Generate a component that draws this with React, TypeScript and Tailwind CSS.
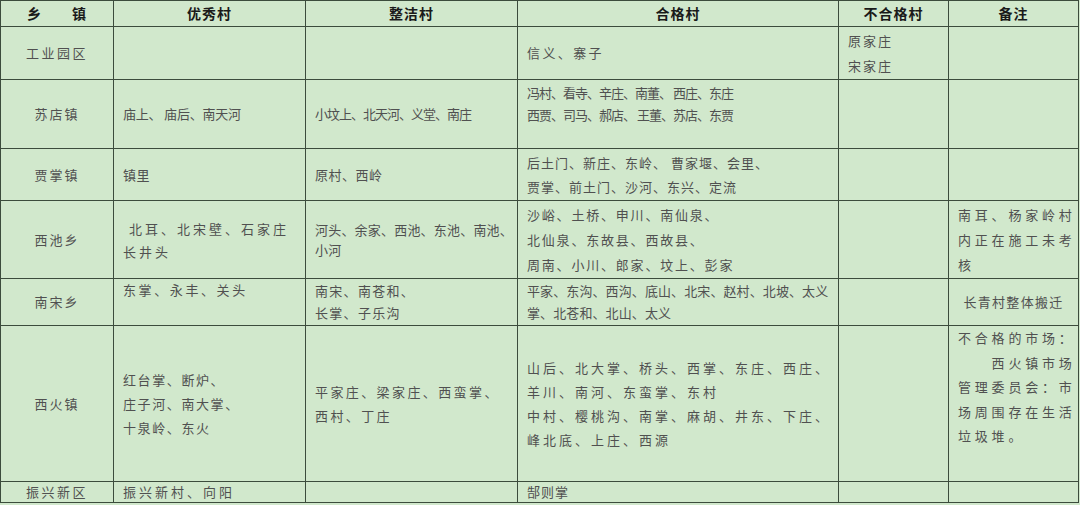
const font = { fontFamily: '"Noto Sans CJK SC", "Noto Sans", sans-serif' }

type Cell = { lines: string[]; cls?: string }

const cols = ['w-[113px]', 'w-[192px]', 'w-[212px]', 'w-[321px]', 'w-[110px]', 'w-[130px]']

const head = ['乡\u3000\u3000镇', '优秀村', '整洁村', '合格村', '不合格村', '备注']

const rows: { h: string; cells: Cell[] }[] = [
  {
    h: 'h-[53px]',
    cells: [
      { lines: ['工业园区'], cls: 'text-center tracking-[2.5px]' },
      { lines: [] },
      { lines: [] },
      { lines: ['信义、寨子'], cls: 'tracking-[2.4px]' },
      { lines: ['原家庄', '宋家庄'], cls: 'tracking-[2px] leading-[25px]' },
      { lines: [] },
    ],
  },
  {
    h: 'h-[69px]',
    cells: [
      { lines: ['苏店镇'], cls: 'text-center tracking-[2px]' },
      { lines: ['庙上、 庙后、南天河'], cls: 'tracking-[-0.2px]' },
      { lines: ['小坟上、北天河、义堂、南庄'], cls: 'tracking-[-1px]' },
      { lines: ['冯村、看寺、辛庄、南董、 西庄、东庄', '西贾、司马、郝店、 王董、苏店、东贾'], cls: 'align-top pt-[2px] tracking-[-1px] leading-[22px]' },
      { lines: [] },
      { lines: [] },
    ],
  },
  {
    h: 'h-[52px]',
    cells: [
      { lines: ['贾掌镇'], cls: 'text-center tracking-[2px]' },
      { lines: ['镇里'], cls: 'tracking-[0.5px]' },
      { lines: ['原村、西岭'], cls: 'tracking-[0.5px]' },
      { lines: ['后土门、新庄、东岭、 曹家堰、会里、', '贾掌、前土门、沙河、东兴、定流'], cls: 'tracking-[1px] leading-[24px]' },
      { lines: [] },
      { lines: [] },
    ],
  },
  {
    h: 'h-[78px]',
    cells: [
      { lines: ['西池乡'], cls: 'text-center tracking-[2px]' },
      { lines: ['\u00a0北耳、北宋壁、石家庄', '长井头'], cls: 'tracking-[3px] leading-[23px]' },
      { lines: ['河头、余家、西池、东池、南池、', '小河'], cls: 'tracking-[0.2px] leading-[20px]' },
      { lines: ['沙峪、土桥、申川、南仙泉、', '北仙泉、东故县、西故县、', '周南、小川、郎家、坟上、彭家'], cls: 'tracking-[1.8px] leading-[25px]' },
      { lines: [] },
      { lines: ['南耳、杨家岭村', '内正在施工未考', '核'], cls: 'tracking-[3.8px] leading-[25px]' },
    ],
  },
  {
    h: 'h-[47px]',
    cells: [
      { lines: ['南宋乡'], cls: 'text-center tracking-[2px]' },
      { lines: ['东掌、永丰、关头'], cls: 'align-top pt-[1px] tracking-[2.6px]' },
      { lines: ['南宋、南苍和、', '长掌、子乐沟'], cls: 'tracking-[1.3px] leading-[22px]' },
      { lines: ['平家、东沟、西沟、底山、北宋、赵村、北坡、太义', '掌、北苍和、北山、太义'], cls: 'tracking-[0.1px] leading-[22px]' },
      { lines: [] },
      { lines: ['长青村整体搬迁'], cls: 'text-center tracking-[1.3px]' },
    ],
  },
  {
    h: 'h-[156px]',
    cells: [
      { lines: ['西火镇'], cls: 'text-center tracking-[2px]' },
      { lines: ['红台掌、断炉、', '庄子河、南大掌、', '十泉岭、东火'], cls: 'tracking-[1.6px] leading-[24px]' },
      { lines: ['平家庄、梁家庄、西蛮掌、', '西村、丁庄'], cls: 'tracking-[2.4px] leading-[24px]' },
      { lines: ['山后、北大掌、桥头、西掌、东庄、西庄、', '羊川、南河、东蛮掌、东村', '中村、樱桃沟、南掌、麻胡、井东、下庄、', '峰北底、上庄、西源'], cls: 'tracking-[3px] leading-[24px]' },
      { lines: [] },
      { lines: ['不合格的市场：', '\u3000\u3000西火镇市场', '管理委员会：市', '场周围存在生活', '垃圾堆。'], cls: 'align-top pt-[0px] tracking-[3.8px] leading-[24.5px]' },
    ],
  },
  {
    h: 'h-[21px]',
    cells: [
      { lines: ['振兴新区'], cls: 'text-center tracking-[2.5px]' },
      { lines: ['振兴新村、向阳'], cls: 'tracking-[3px]' },
      { lines: [] },
      { lines: ['郜则掌'], cls: 'tracking-[1px]' },
      { lines: [] },
      { lines: [] },
    ],
  },
]

export default function App() {
  return (
    <div className="w-[1080px] h-[505px] bg-[#d1e8cc] overflow-hidden" style={font}>
      <table className="table-fixed border-collapse w-[1078px] text-[13px] text-[#505050]">
        <colgroup>
          {cols.map((c, i) => <col key={i} className={c} />)}
        </colgroup>
        <thead>
          <tr className="h-[26px]">
            {head.map((t, i) => (
              <th key={i}
                className="border-[1.5px] border-[#3c4c3c] text-center font-bold text-[14px] text-[#1a1a1a] tracking-[1px] whitespace-pre align-middle p-0">
                {t}
              </th>
            ))}
          </tr>
        </thead>
        <tbody>
          {rows.map((r, ri) => (
            <tr key={ri} className={r.h}>
              {r.cells.map((c, ci) => (
                <td key={ci}
                  className={`border-[1.5px] border-[#3c4c3c] align-middle px-[9px] py-0 whitespace-nowrap overflow-hidden ${c.cls ?? ''}`}>
                  {c.lines.map((l, li) => (
                    <div key={li}>{l}</div>
                  ))}
                </td>
              ))}
            </tr>
          ))}
        </tbody>
      </table>
    </div>
  )
}
